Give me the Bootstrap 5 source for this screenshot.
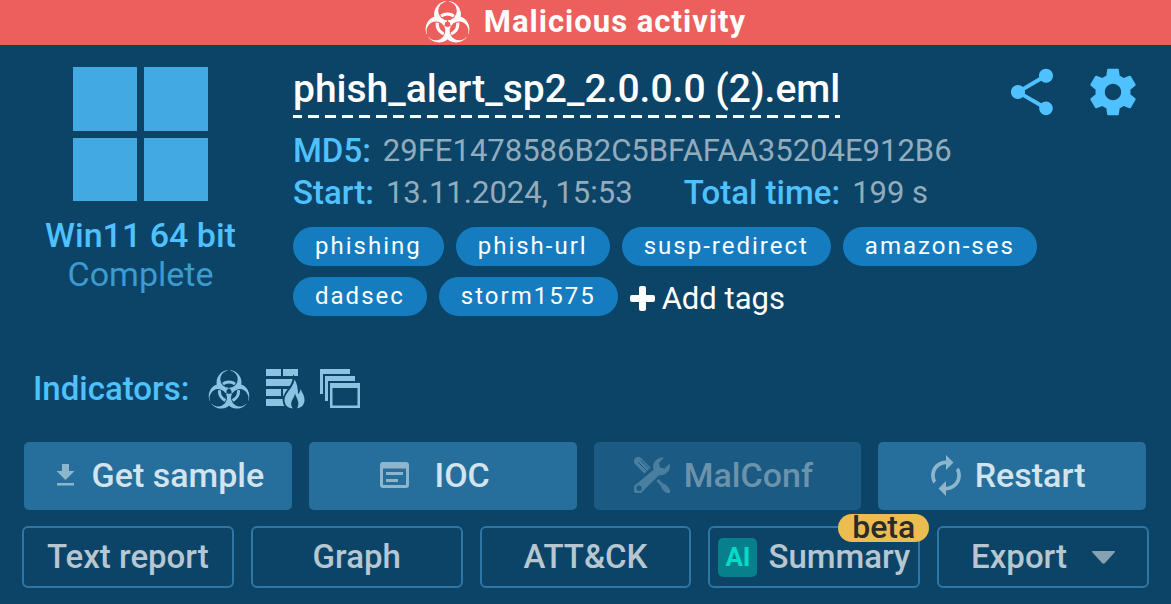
<!DOCTYPE html>
<html lang="en">
<head>
<meta charset="utf-8">
<meta name="viewport" content="width=device-width, initial-scale=1">
<title>Malicious activity</title>
<link rel="stylesheet" href="https://cdn.jsdelivr.net/npm/bootstrap@5.3.0/dist/css/bootstrap.min.css">
<style>
  body { background: #0c4468; font-family: Roboto, sans-serif; color: #fff; }
  svg { flex: none; }
  .verdict { height: 45px; gap: 14px; padding-bottom: 2px; background: #ec5f5d; font-size: 31px; line-height: 42px; font-weight: 700; letter-spacing: 1px; }
  .task { padding: 19px 22px 16px; }
  .task-info { gap: 34px; margin-bottom: 52px; }
  .os { flex: 0 0 237px; padding-top: 3px; font-size: 34px; line-height: 39px; }
  .os svg { margin-bottom: 15px; }
  .os-name, .key { color: #4fc1ff; font-weight: 500; }
  .os-state { color: #3d9bd0; }
  .file-name { font-size: 39px; line-height: 50px; font-weight: 500; padding-bottom: 4px;
    background: linear-gradient(90deg, #fff 9px, transparent 9px 15px, #fff 15px) left bottom / 17px 3px repeat-x; }
  .title-row { margin-bottom: 10px; }
  .actions { gap: 25px; }
  .icon-btn { color: #4fc1ff; border: 0; line-height: 1; }
  .key { font-size: 33px; line-height: 42px; }
  .facts { gap: 12px; }
  .val { font-size: 31px; line-height: 40px; color: #93acbc; }
  .second-fact { margin-left: 39px; }
  .tags { gap: 11px 12px; margin-top: 13px; }
  .tag { background: #147cbf; color: #fff; border-radius: 20px; padding: 0 22px; font-size: 24px; line-height: 39px; letter-spacing: 2px; text-decoration: none; }
  .tag:hover { color: #fff; }
  .add-tags { gap: 7px; padding: 4px 0 0; font-size: 31px; line-height: 35px; color: #fff; border: 0; }
  .indicators { gap: 15px; padding-left: 11px; margin-bottom: 32px; color: #8cc3e3; }
  .indicators .key { margin-right: 4px; }
  .grid-main, .grid-more { display: grid; gap: 17px; }
  .grid-main { grid-template-columns: repeat(4, 1fr); padding: 0 3px 0 2px; margin-bottom: 16px; }
  .grid-more { grid-template-columns: repeat(5, 1fr); }
  .act { height: 68px; gap: 14px; padding: 0 0 2px; border: 0; border-radius: 5px; background: #266f9d; color: #d4e4ed; font-size: 34px; line-height: 42px; font-weight: 500; }
  .act svg { color: #8fb5cd; }
  .act:disabled { background: #1b5a83; color: #6c93ac; opacity: 1; }
  .act:disabled svg { color: #4a7e9e; }
  .more { height: 62px; gap: 11px; border: 2px solid #2e76a6; border-radius: 6px; background: transparent; color: #b6c7d1; font-size: 33px; line-height: 42px; font-weight: 500; }
  .ai { width: 39px; height: 39px; border-radius: 5px; background: #077f8d; color: #00dcc6; font-size: 26px; line-height: 39px; font-weight: 700; }
  .beta { top: -14px; right: -11px; height: 28px; border-radius: 14px; padding: 0 14px; background: #ebbd50; color: #2b2b2b; font-size: 32px; line-height: 26px; }
  .export { gap: 25px; }
</style>
</head>
<body>
<svg class="position-absolute" width="0" height="0" aria-hidden="true">
  <defs>
    <mask id="bioBlades" maskUnits="userSpaceOnUse" x="-26" y="-27" width="52" height="49">
      <g fill="#fff">
        <circle cy="-11" r="15"/>
        <circle cy="-11" r="15" transform="rotate(120)"/>
        <circle cy="-11" r="15" transform="rotate(240)"/>
      </g>
      <g id="bioCut" fill="#000">
        <circle cy="-15" r="10.5"/><path d="M-2-28h4v8h-4zM-.5-6h1v6h-1z"/>
      </g>
      <use href="#bioCut" transform="rotate(120)"/>
      <use href="#bioCut" transform="rotate(240)"/>
      <circle r="3" fill="#000"/>
    </mask>
    <mask id="bioRing" maskUnits="userSpaceOnUse" x="-26" y="-27" width="52" height="49">
      <g fill="#fff">
        <circle cy="-15" r="9.5"/>
        <circle cy="-15" r="9.5" transform="rotate(120)"/>
        <circle cy="-15" r="9.5" transform="rotate(240)"/>
      </g>
    </mask>
    <symbol id="biohazard" viewBox="-25 -26 50 47">
      <rect x="-25" y="-26" width="50" height="47" fill="currentColor" mask="url(#bioBlades)"/>
      <circle r="11.5" fill="none" stroke="currentColor" stroke-width="3.5" mask="url(#bioRing)"/>
    </symbol>
  </defs>
</svg>

<header class="verdict d-flex justify-content-center align-items-center">
  <svg width="45" height="42" aria-hidden="true"><use href="#biohazard"/></svg>
  <span>Malicious activity</span>
</header>

<main class="task">
  <section class="task-info d-flex">
    <div class="os text-center">
      <svg class="d-block mx-auto" width="135" height="134" viewBox="0 0 135 134" fill="#42a9e3" aria-hidden="true"><path d="M0 0h64v64H0zM71 0h64v64H71zM0 71h64v63H0zM71 71h64v63H71z"/></svg>
      <div class="os-name">Win11 64 bit</div>
      <div class="os-state">Complete</div>
    </div>
    <div class="flex-grow-1">
      <div class="title-row d-flex align-items-start justify-content-between">
        <h1 class="file-name m-0">phish_alert_sp2_2.0.0.0 (2).eml</h1>
        <div class="actions d-flex me-2">
          <button type="button" class="btn icon-btn p-0" aria-label="Share">
            <svg width="56" height="56" viewBox="0 0 24 24" fill="currentColor"><path d="M18 16.08c-.76 0-1.44.3-1.96.77L8.91 12.7c.05-.23.09-.46.09-.7s-.04-.47-.09-.7l7.05-4.11c.54.5 1.25.81 2.04.81 1.66 0 3-1.34 3-3s-1.34-3-3-3-3 1.34-3 3c0 .24.04.47.09.7L8.04 9.81C7.5 9.31 6.79 9 6 9c-1.66 0-3 1.34-3 3s1.34 3 3 3c.79 0 1.5-.31 2.04-.81l7.12 4.16c-.05.21-.08.43-.08.65 0 1.61 1.31 2.92 2.92 2.92s2.92-1.31 2.92-2.92-1.31-2.92-2.92-2.92z"/></svg>
          </button>
          <button type="button" class="btn icon-btn p-0" aria-label="Settings">
            <svg width="56" height="56" viewBox="0 0 24 24" fill="currentColor"><path d="M19.43 12.98c.04-.32.07-.64.07-.98s-.03-.66-.07-.98l2.11-1.65c.19-.15.24-.42.12-.64l-2-3.46c-.12-.22-.39-.3-.61-.22l-2.49 1c-.52-.4-1.08-.73-1.69-.98l-.38-2.65C14.46 2.18 14.25 2 14 2h-4c-.25 0-.46.18-.49.42l-.38 2.65c-.61.25-1.17.59-1.69.98l-2.49-1c-.23-.09-.49 0-.61.22l-2 3.46c-.13.22-.07.49.12.64l2.11 1.65c-.04.32-.07.65-.07.98s.03.66.07.98l-2.11 1.65c-.19.15-.24.42-.12.64l2 3.46c.12.22.39.3.61.22l2.49-1c.52.4 1.08.73 1.69.98l.38 2.65c.03.24.24.42.49.42h4c.25 0 .46-.18.49-.42l.38-2.65c.61-.25 1.17-.59 1.69-.98l2.49 1c.23.09.49 0 .61-.22l2-3.46c.12-.22.07-.49-.12-.64l-2.11-1.65zM12 15.5c-1.93 0-3.5-1.57-3.5-3.5s1.57-3.5 3.5-3.5 3.5 1.57 3.5 3.5-1.57 3.5-3.5 3.5z"/></svg>
          </button>
        </div>
      </div>
      <div class="facts d-flex align-items-center">
        <span class="key">MD5:</span><span class="val">29FE1478586B2C5BFAFAA35204E912B6</span>
      </div>
      <div class="facts d-flex align-items-center">
        <span class="key">Start:</span><span class="val">13.11.2024, 15:53</span>
        <span class="key second-fact">Total time:</span><span class="val">199 s</span>
      </div>
      <div class="tags d-flex flex-wrap">
        <a class="tag" href="#">phishing</a>
        <a class="tag" href="#">phish-url</a>
        <a class="tag" href="#">susp-redirect</a>
        <a class="tag" href="#">amazon-ses</a>
        <a class="tag" href="#">dadsec</a>
        <a class="tag" href="#">storm1575</a>
        <button type="button" class="btn add-tags d-flex align-items-center">
          <svg width="25" height="25" viewBox="0 0 25 25" fill="currentColor" aria-hidden="true"><rect x="9" width="7" height="25" rx="2"/><rect y="9" width="25" height="7" rx="2"/></svg>
          Add tags
        </button>
      </div>
    </div>
  </section>

  <section class="indicators d-flex align-items-center">
    <span class="key">Indicators:</span>
    <svg width="42" height="39" role="img" aria-label="Malicious"><use href="#biohazard"/></svg>
    <svg width="40" height="40" viewBox="0 0 40 40" role="img" aria-label="Network threats">
      <path fill="currentColor" d="M1 0h15v7H1zM18 0h15v7H18zM1 10h30v7H1zM1 20h15v7H1zM18 20h10v7H18zM1 30h22v7H1z"/>
      <path fill="currentColor" stroke="#0c4468" stroke-width="4" paint-order="stroke" d="M29.500 10.500C28.500 19 19.500 24 19.500 31C19.500 36 23 39 26.500 39.300H32.500C36.500 38.500 39.500 36 39.500 31C39.500 26 37 23.500 35.500 20C35.300 22.500 34.500 24 33 25C33 19 32 14 29.500 10.500z"/>
      <path fill="#0c4468" d="M30 24.500C29.500 29 25 32 26.500 37L28 40H32L33 37C34.500 33 31.500 29 30 24.500z"/>
    </svg>
    <svg width="40" height="40" viewBox="0 0 40 40" fill="currentColor" role="img" aria-label="Processes">
      <path fill-rule="evenodd" d="M0 0h30v5H3v20H0zM5 7h30v5H8v20H5zM10 14h30v25H10zM12.500 19v17.500h25V19z"/>
    </svg>
  </section>

  <div class="grid-main">
    <button type="button" class="btn act d-flex align-items-center justify-content-center">
      <svg width="26" height="22" viewBox="0 0 26 22" fill="currentColor" aria-hidden="true"><path d="M10 0h7v7h5.500l-9 9-9-9H10zM5 19h17v2.500H5z"/></svg>
      Get sample
    </button>
    <button type="button" class="btn act d-flex align-items-center justify-content-center pe-3">
      <svg width="41" height="26" viewBox="0 0 41 26" aria-hidden="true"><path fill="currentColor" fill-rule="evenodd" d="M3 0h23a3 3 0 0 1 3 3v20a3 3 0 0 1-3 3H3a3 3 0 0 1-3-3V3a3 3 0 0 1 3-3zM3 6.500V23h23V6.500zM6 10h17v3H6zM6 17h12v3H6z"/></svg>
      IOC
    </button>
    <button type="button" class="btn act d-flex align-items-center justify-content-center pe-2" disabled>
      <svg width="36" height="36" viewBox="0 0 36 36" fill="currentColor" aria-hidden="true">
        <path d="M1.200 1.200a4.500 4.500 0 0 1 6 0L16.500 10.500l-6 6L1.200 7.200a4.500 4.500 0 0 1 0-6z"/>
        <path d="M4 5l9 9M6.500 3l8.500 8.500" stroke="#1b5a83" stroke-width="1"/>
        <path fill-rule="evenodd" d="M30 .600A9.500 9.500 0 0 0 19.500 13L1.500 27.700A5 5 0 1 0 8.400 34.600L25 18.200A9.500 9.500 0 0 0 35.700 6.500L30.500 11.500L26 10.500L25 6zM5 28.600a2.600 2.600 0 1 1 0 5.200a2.600 2.600 0 1 1 0-5.200z"/>
        <path d="M22.500 24l2-2l4.500 4.500c3 .5 5.500 3.500 7 6.500v3h-3c-3.500-1.500-5.500-4-6-7z"/>
      </svg>
      MalConf
    </button>
    <button type="button" class="btn act d-flex align-items-center justify-content-center pe-2">
      <svg width="30" height="41" viewBox="4 1 16 22" fill="currentColor" aria-hidden="true"><path d="M12 6v3l4-4-4-4v3c-4.420 0-8 3.580-8 8 0 1.570.46 3.030 1.240 4.260L6.700 14.800c-.45-.83-.7-1.790-.7-2.800 0-3.310 2.690-6 6-6zm6.760 1.740L17.300 9.200c.44.84.7 1.790.7 2.800 0 3.310-2.690 6-6 6v-3l-4 4 4 4v-3c4.420 0 8-3.580 8-8 0-1.570-.46-3.030-1.240-4.260z"/></svg>
      Restart
    </button>
  </div>

  <div class="grid-more">
    <button type="button" class="btn more p-0">Text report</button>
    <button type="button" class="btn more p-0">Graph</button>
    <button type="button" class="btn more p-0">ATT&amp;CK</button>
    <button type="button" class="btn more position-relative d-flex align-items-center justify-content-center p-0">
      <span class="ai">AI</span>Summary
      <span class="beta position-absolute">beta</span>
    </button>
    <button type="button" class="btn more export d-flex align-items-center justify-content-center p-0" aria-haspopup="menu">
      Export
      <svg width="23" height="13" viewBox="0 0 23 13" fill="#86a1b3" aria-hidden="true"><path d="M1 0h21q2 0 .5 1.500L13 12q-1.500 1.500-3 0L.5 1.500Q-1 0 1 0z"/></svg>
    </button>
  </div>
</main>
<script src="https://cdn.jsdelivr.net/npm/bootstrap@5.3.0/dist/js/bootstrap.bundle.min.js"></script>
</body>
</html>
